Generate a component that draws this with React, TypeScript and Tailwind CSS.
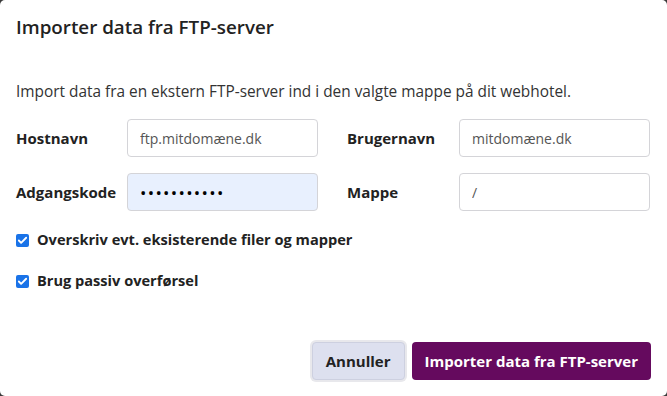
import { Check } from 'lucide-react';

function Field({ label, value, password, labelWidth }: { label: string; value: string; password?: boolean; labelWidth: string }) {
    return (
        <div className="flex items-center">
            <label className={`${labelWidth} shrink-0 text-[15px] font-bold text-[#222]`}>{label}</label>
            <input
                type={password ? 'password' : 'text'}
                defaultValue={value}
                className={`h-[38px] w-[191px] rounded-[4px] border border-[#d4d4d8] px-[12px] outline-none ${password ? 'bg-[#e8f0fe] text-[17px] tracking-[1.3px] text-black' : 'bg-white text-[14px] text-[#555]'}`}
            />
        </div>
    );
}

function Checkbox({ label }: { label: string }) {
    return (
        <label className="flex h-[20px] items-center gap-[8px] text-[14.6px] font-bold text-[#222]">
            <span className="flex h-[13px] w-[13px] items-center justify-center rounded-[2px] bg-[#1a73e8]">
                <Check size={11} strokeWidth={4} className="text-white" />
            </span>
            {label}
        </label>
    );
}

export default function App() {
    return (
        <div className="h-[396px] w-[667px] bg-[#3a3a3a]" style={{ fontFamily: '"Open Sans", "Noto Sans", sans-serif' }}>
            <div className="flex h-full w-full flex-col rounded-[5px] bg-white px-4">
                <h2 className="pt-[13px] text-[18.8px] leading-[28px] font-semibold text-[#222]">Importer data fra FTP-server</h2>

                <p className="mt-[40px] text-[15.4px] leading-[21px] text-[#333]">
                    Import data fra en ekstern FTP-server ind i den valgte mappe på dit webhotel.
                </p>

                <div className="mt-[17px] grid grid-cols-[331px_1fr] gap-y-[16px]">
                    <Field label="Hostnavn" value="ftp.mitdomæne.dk" labelWidth="w-[111px]" />
                    <Field label="Brugernavn" value="mitdomæne.dk" labelWidth="w-[112px]" />
                    <Field label="Adgangskode" value="mitkodeord1" password labelWidth="w-[111px]" />
                    <Field label="Mappe" value="/" labelWidth="w-[112px]" />
                </div>

                <div className="mt-[19px] flex flex-col gap-[21px]">
                    <Checkbox label="Overskriv evt. eksisterende filer og mapper" />
                    <Checkbox label="Brug passiv overførsel" />
                </div>

                <div className="mt-auto mb-[16px] flex justify-end gap-[7px]">
                    <button className="h-[38px] rounded-[4px] border border-[#cdd0e0] bg-[#dde0ef] px-[13px] text-[15px] font-bold text-[#222] ring-[2px] ring-[#e8e8ec]">
                        Annuller
                    </button>
                    <button className="h-[38px] rounded-[4px] bg-[#650a5e] px-[13px] text-[15px] font-bold text-white">
                        Importer data fra FTP-server
                    </button>
                </div>
            </div>
        </div>
    );
}
